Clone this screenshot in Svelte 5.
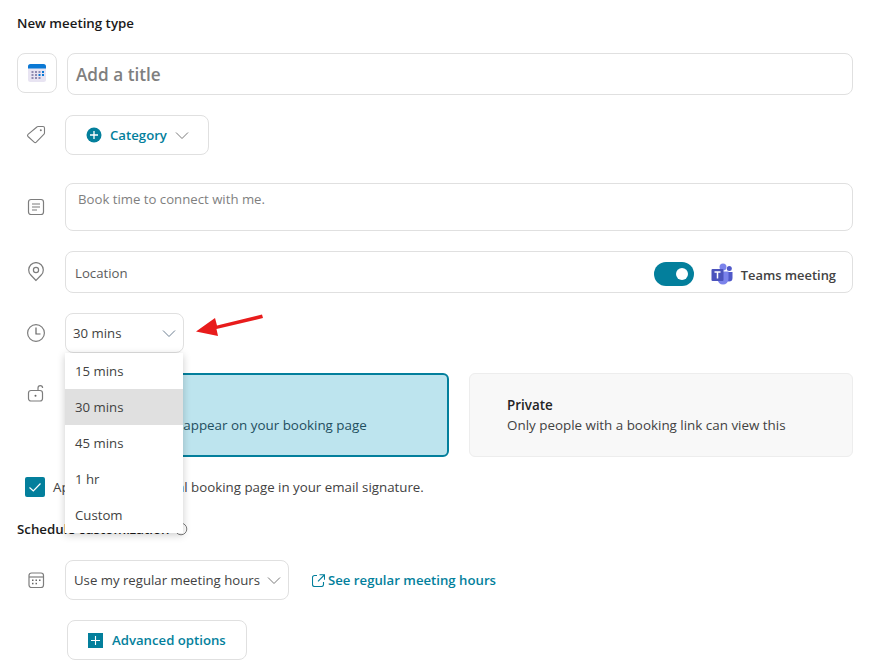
<script>
  const durations = ['15 mins', '30 mins', '45 mins', '1 hr', 'Custom']
  let selected = '30 mins'
</script>

<div class="page">
  <h1>New meeting type</h1>

  <div class="row title-row">
    <div class="icon-box">
      <svg width="20" height="20" viewBox="0 0 20 20">
        <rect x="1" y="1" width="18" height="18" rx="2.5" fill="#e8e4f2" />
        <path d="M1 5.500V3.500A2.500 2.500 0 0 1 3.500 1h13A2.500 2.500 0 0 1 19 3.500V5.500z" fill="#0a78d4" />
        <g fill="#8f8bb0">
          <rect x="4.500" y="8" width="2" height="2" /><rect x="8" y="8" width="2" height="2" /><rect x="11.500" y="8" width="2" height="2" />
          <rect x="4.500" y="11" width="2" height="2" /><rect x="8" y="11" width="2" height="2" />
          <rect x="4.500" y="14" width="2" height="2" /><rect x="8" y="14" width="2" height="2" /><rect x="11.500" y="14" width="2" height="2" />
        </g>
        <rect x="11.500" y="11" width="2" height="2" fill="#0a78d4" />
        <rect x="15" y="8" width="2" height="2" fill="#0a78d4" />
        <rect x="15" y="11" width="2" height="2" fill="#0a78d4" />
      </svg>
    </div>
    <div class="field title-field">Add a title</div>
  </div>

  <div class="row category-row">
    <span class="side-icon">
      <svg width="20" height="20" viewBox="0 0 20 20" fill="none" stroke="#7d7d7d" stroke-width="1.100">
        <path d="M12 1.500h5a1.500 1.500 0 0 1 1.500 1.500v5a1.500 1.500 0 0 1-.45 1.050l-7.800 8a1.500 1.500 0 0 1-2.100 0L2 11.500a1.500 1.500 0 0 1 0-2.100l8.900-7.400A1.500 1.500 0 0 1 12 1.500z" />
        <circle cx="14.800" cy="5.200" r="1" fill="#7d7d7d" stroke="none" />
      </svg>
    </span>
    <button class="btn category">
      <svg width="16" height="16" viewBox="0 0 16 16">
        <circle cx="8" cy="8" r="7.500" fill="#037f9c" />
        <path d="M8 4v8M4 8h8" stroke="#fff" stroke-width="1.300" />
      </svg>
      <span>Category</span>
      <svg class="chev" width="14" height="14" viewBox="0 0 14 14" fill="none" stroke="#7a7a7a"><path d="M1 4.500 7 10.500l6-6" /></svg>
    </button>
  </div>

  <div class="row desc-row">
    <span class="side-icon">
      <svg width="20" height="20" viewBox="0 0 20 20" fill="none" stroke="#7d7d7d" stroke-width="1.200">
        <rect x="2.500" y="2.500" width="15" height="15" rx="2.500" />
        <path d="M6 7h8M6 10h8M6 13h5" />
      </svg>
    </span>
    <div class="field desc-field">Book time to connect with me.</div>
  </div>

  <div class="row location-row">
    <span class="side-icon">
      <svg width="20" height="20" viewBox="0 0 20 20" fill="none" stroke="#7d7d7d" stroke-width="1.200">
        <path d="M10 18.500 4.800 13A7.300 7.300 0 1 1 15.200 13z" />
        <circle cx="10" cy="8" r="2.600" />
      </svg>
    </span>
    <div class="field location-field">
      <span class="location-text">Location</span>
      <span class="toggle"><span class="knob"></span></span>
      <svg class="teams" width="22" height="22" viewBox="0 0 22 22">
        <circle cx="18.300" cy="5.500" r="2.500" fill="#5059c9" />
        <path d="M14.500 9h7v6a3.500 3.500 0 0 1-7 0z" fill="#5059c9" />
        <circle cx="12" cy="4" r="3.500" fill="#7b83eb" />
        <path d="M6.500 8.500h11V16a5.500 5.500 0 0 1-11 0z" fill="#7b83eb" />
        <rect x="0.500" y="6" width="12" height="12" rx="1" fill="#4b53bc" />
        <path d="M3.500 9h6M6.500 9v6.500" stroke="#fff" stroke-width="1.500" fill="none" />
      </svg>
      <span class="teams-label">Teams meeting</span>
    </div>
  </div>

  <div class="row duration-row">
    <span class="side-icon">
      <svg width="20" height="20" viewBox="0 0 20 20" fill="none" stroke="#7d7d7d" stroke-width="1.200">
        <circle cx="10" cy="10" r="8.400" />
        <path d="M10 4.500V11h4.500" stroke="#666" />
      </svg>
    </span>
    <div class="select-wrap">
      <button class="btn select duration">
        <span>30 mins</span>
        <svg class="chev" width="14" height="14" viewBox="0 0 14 14" fill="none" stroke="#6d7f92"><path d="M1 4.500 7 10.500l6-6" /></svg>
      </button>
      <ul class="menu">
        {#each durations as d}
          <li class:active={d === selected}>{d}</li>
        {/each}
      </ul>
      <svg class="arrow" width="72" height="30" viewBox="0 0 72 30">
        <path d="M67 2.500 22 13.500 20 6 1 19.500l22 4.500-1.500-7 46.500-11z" fill="#e81c1c" />
      </svg>
    </div>
  </div>

  <div class="row visibility-row">
    <span class="side-icon">
      <svg width="20" height="20" viewBox="0 0 20 20" fill="none" stroke="#7d7d7d" stroke-width="1.200">
        <rect x="2.500" y="7.500" width="14" height="10.500" rx="2.500" />
        <path d="M12 7.500V5a2.300 2.300 0 0 1 4.600 0" />
        <circle cx="9.500" cy="12.800" r="1" fill="#666" stroke="none" />
      </svg>
    </span>
    <div class="cards">
      <div class="card on">
        <strong>Public</strong>
        <span>Meeting types appear on your booking page</span>
      </div>
      <div class="card">
        <strong>Private</strong>
        <span>Only people with a booking link can view this</span>
      </div>
    </div>
  </div>

  <div class="check-row">
    <span class="checkbox">
      <svg width="14" height="14" viewBox="0 0 14 14" fill="none" stroke="#fff" stroke-width="1.200"><path d="M1.500 7.500 5.300 11 12.500 3.500" /></svg>
    </span>
    <span>Apply this to personal booking page in your email signature.</span>
  </div>

  <h2>
    Schedule customization
    <svg width="14" height="14" viewBox="0 0 14 14" fill="none" stroke="#7d7d7d"><circle cx="7" cy="7" r="5.800" /></svg>
  </h2>

  <div class="row hours-row">
    <span class="side-icon">
      <svg width="20" height="20" viewBox="0 0 20 20" fill="none" stroke="#7d7d7d" stroke-width="1.200">
        <rect x="3" y="3" width="14.500" height="14.500" rx="2.500" />
        <path d="M3 7h14.500" />
        <g fill="#666" stroke="none">
          <rect x="6" y="9.500" width="1.500" height="1.500" /><rect x="9.500" y="9.500" width="1.500" height="1.500" /><rect x="13" y="9.500" width="1.500" height="1.500" />
          <rect x="6" y="12.800" width="1.500" height="1.500" /><rect x="9.500" y="12.800" width="1.500" height="1.500" />
        </g>
      </svg>
    </span>
    <button class="btn select hours">
      <span>Use my regular meeting hours</span>
      <svg class="chev" width="14" height="14" viewBox="0 0 14 14" fill="none" stroke="#7a7a7a"><path d="M1 4.500 7 10.500l6-6" /></svg>
    </button>
    <a class="link" href="#hours">
      <svg width="13" height="13" viewBox="0 0 13 13" fill="none" stroke="#037f9c" stroke-width="1.100">
        <path d="M5 1.500H2.500a2 2 0 0 0-2 2v7a2 2 0 0 0 2 2h7a2 2 0 0 0 2-2V8M7.500.700h5v5M12.300 1 6 7.300" />
      </svg>
      See regular meeting hours
    </a>
  </div>

  <button class="btn advanced">
    <svg width="15" height="15" viewBox="0 0 15 15">
      <rect width="15" height="15" fill="#037f9c" />
      <path d="M7.500 3v9M3 7.500h9" stroke="#fff" stroke-width="1.100" />
    </svg>
    Advanced options
  </button>
</div>

<style>
  :global(body) {
    margin: 0;
    background: #fff;
    font-family: "Open Sans", "Noto Sans", sans-serif;
    font-size: 13.2px;
    color: #424242;
  }
  .page {
    padding: 14px 16px 0 17px;
    height: 657px;
    overflow: hidden;
    position: relative;
  }
  h1, h2 {
    margin: 0;
    font-size: 13.3px;
    font-weight: 600;
    color: #1a1a1a;
    line-height: 18px;
  }
  h1 {
    margin-bottom: 21px;
  }
  .row {
    display: flex;
    align-items: center;
  }
  .side-icon {
    width: 38px;
    margin-right: 10px;
    display: flex;
    justify-content: center;
    flex: none;
  }
  .field, .btn {
    border: 1px solid #e0e0e0;
    border-radius: 8px;
    background: #fff;
    box-sizing: border-box;
    font-family: inherit;
  }
  .field {
    flex: 1;
    display: flex;
    align-items: center;
  }
  .btn {
    display: flex;
    align-items: center;
    height: 40px;
    font-size: 13.2px;
    color: #424242;
    padding: 0;
  }
  .title-row {
    margin-bottom: 20px;
    align-items: flex-start;
  }
  .icon-box {
    width: 40px;
    height: 40px;
    box-sizing: border-box;
    border: 1px solid #e0e0e0;
    border-radius: 8px;
    margin-right: 10px;
    display: flex;
    align-items: center;
    justify-content: center;
  }
  .title-field {
    height: 42px;
    padding-left: 8px;
    font-size: 17.2px;
    font-weight: 600;
    color: #7f7f7f;
  }
  .category-row {
    margin-bottom: 28px;
  }
  .category {
    width: 144px;
    padding-left: 20px;
    gap: 8px;
    color: #037f9c;
    font-weight: 600;
  }
  .desc-row {
    margin-bottom: 20px;
  }
  .desc-field {
    height: 48px;
    padding: 5px 12px;
    align-items: flex-start;
    color: #7f7f7f;
    line-height: 20px;
  }
  .location-row {
    margin-bottom: 20px;
  }
  .location-field {
    height: 42px;
    padding: 2px 16px 0 9px;
  }
  .location-text {
    flex: 1;
    color: #5c5c5c;
  }
  .toggle {
    width: 40px;
    height: 24px;
    margin-top: 2px;
    border-radius: 12px;
    background: #037f9c;
    margin-right: 17px;
    position: relative;
  }
  .knob {
    position: absolute;
    right: 6px;
    top: 6px;
    width: 12px;
    height: 12px;
    border-radius: 50%;
    background: #fff;
  }
  .teams {
    margin: 2px 8px 0 0;
  }
  .teams-label {
    margin-top: 4px;
    font-size: 12.9px;
    font-weight: 600;
    color: #424242;
  }
  .duration-row {
    margin-bottom: 20px;
  }
  .select-wrap {
    position: relative;
  }
  .select {
    justify-content: space-between;
    padding: 0 7px;
  }
  .duration {
    width: 119px;
  }
  .menu {
    position: absolute;
    top: 40px;
    left: 0;
    z-index: 5;
    width: 118px;
    margin: 0;
    padding: 0;
    list-style: none;
    background: #fff;
    box-shadow: 0 2px 8px rgba(0, 0, 0, 0.2);
  }
  .menu li {
    height: 36px;
    line-height: 36px;
    padding-left: 10px;
  }
  .menu li.active {
    background: #e0e0e0;
  }
  .arrow {
    position: absolute;
    left: 130px;
    top: -1px;
  }
  .visibility-row {
    margin-bottom: 20px;
    align-items: flex-start;
  }
  .visibility-row .side-icon {
    margin-top: 10px;
  }
  .cards {
    flex: 1;
    display: grid;
    grid-template-columns: 1fr 1fr;
    gap: 20px;
  }
  .card {
    height: 84px;
    box-sizing: border-box;
    padding: 0 37px;
    border: 1px solid #ededed;
    border-radius: 6px;
    background: #f8f8f8;
    display: flex;
    flex-direction: column;
    justify-content: center;
    line-height: 20px;
    font-size: 13.4px;
  }
  .card strong {
    font-weight: 600;
    color: #242424;
  }
  .card.on {
    background: #bde4ee;
    border: 2px solid #037f9c;
    color: #1f4f60;
    padding-left: 25px;
  }
  .check-row {
    display: flex;
    align-items: center;
    gap: 8px;
    margin-left: 8px;
    margin-bottom: 23px;
    font-size: 13.3px;
  }
  .checkbox {
    width: 20px;
    height: 20px;
    background: #037f9c;
    border-radius: 2px;
    display: flex;
    align-items: center;
    justify-content: center;
  }
  h2 {
    display: flex;
    align-items: center;
    gap: 5px;
    margin-bottom: 22px;
  }
  .hours-row {
    margin-bottom: 20px;
  }
  .hours {
    width: 224px;
    padding-left: 8px;
  }
  .link {
    margin-left: 23px;
    display: flex;
    align-items: center;
    gap: 3px;
    color: #037f9c;
    font-weight: 600;
    text-decoration: none;
  }
  .advanced {
    width: 180px;
    margin-left: 50px;
    padding-left: 20px;
    gap: 9px;
    color: #037f9c;
    font-weight: 600;
  }
</style>
